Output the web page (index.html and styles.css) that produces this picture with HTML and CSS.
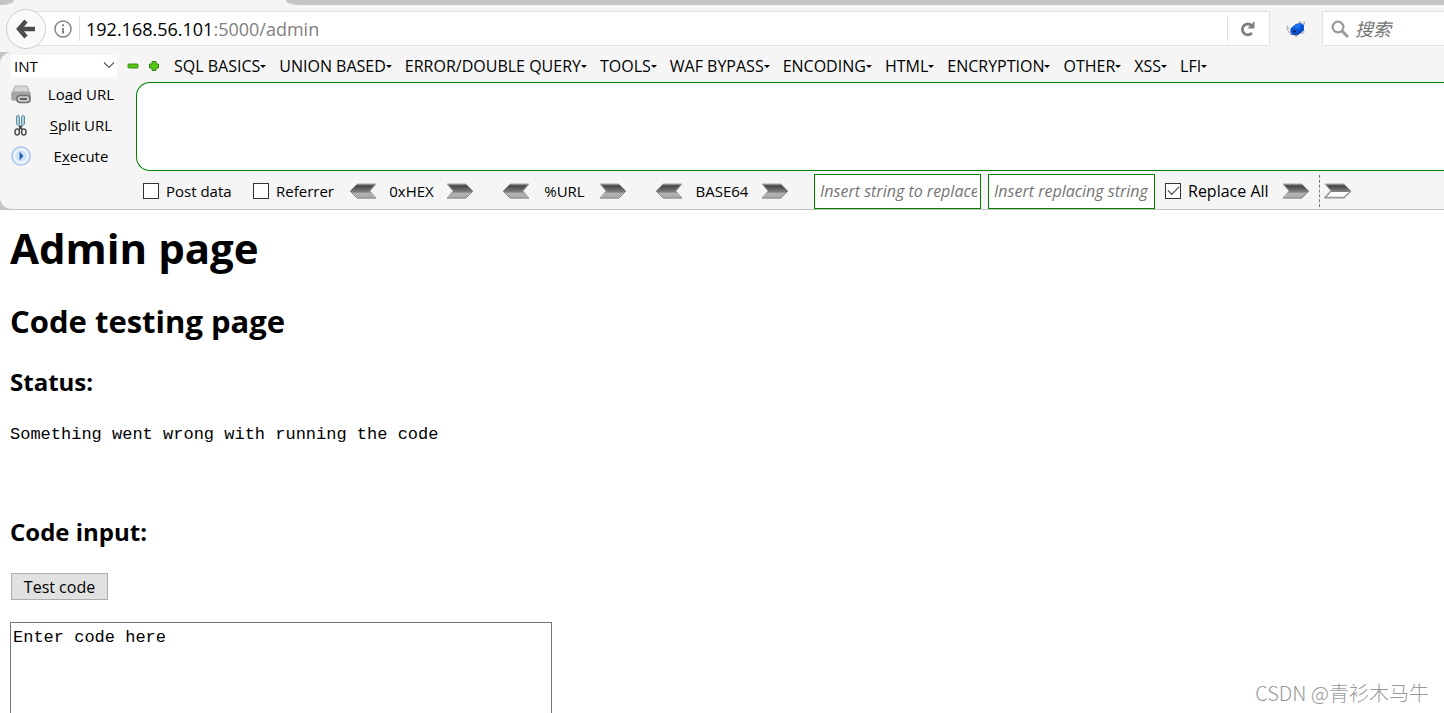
FILE: index.html
```html
<!DOCTYPE html>
<html lang="en">
<head>
<meta charset="utf-8">
<title>Admin page</title>
<link rel="stylesheet" href="styles.css">
</head>
<body>
<svg class="defs" aria-hidden="true">
  <defs>
    <linearGradient id="steel" x1="0" y1="0" x2="0" y2="1">
      <stop offset="0" stop-color="#777"/><stop offset=".15" stop-color="#484848"/><stop offset=".6" stop-color="#828282"/><stop offset=".62" stop-color="#b2b2b2"/><stop offset="1" stop-color="#aaa"/>
    </linearGradient>
    <linearGradient id="steel-open" x1="0" y1="0" x2="0" y2="1">
      <stop offset="0" stop-color="#777"/><stop offset=".15" stop-color="#444"/><stop offset=".56" stop-color="#858585"/><stop offset=".58" stop-color="#fff"/><stop offset="1" stop-color="#fff"/>
    </linearGradient>
    <linearGradient id="drive" x1="0" y1="0" x2="0" y2="1">
      <stop offset="0" stop-color="#ddd"/><stop offset="1" stop-color="#8c8c8c"/>
    </linearGradient>
    <symbol id="arrow" viewBox="0 0 28 16"><path d="M1 1H20L27 8L20 15H1L7 8Z" fill="url(#steel)" stroke="#aaa" stroke-width="1"/><path d="M1 15H20L27 8" fill="none" stroke="#8a8a8a"/></symbol>
    <symbol id="arrow-left" viewBox="0 0 28 16"><path d="M27 1H8L1 8L8 15H27L21 8Z" fill="url(#steel)" stroke="#aaa" stroke-width="1"/><path d="M27 15H8L1 8" fill="none" stroke="#8a8a8a"/></symbol>
    <symbol id="arrow-open" viewBox="0 0 28 16"><path d="M1 1H20L27 8L20 15H1L7 8Z" fill="url(#steel-open)" stroke="#aaa" stroke-width="1"/><path d="M7 8L1 14.5H20L27 8" fill="none" stroke="#999" stroke-width="1.6"/></symbol>
  </defs>
</svg>
<div class="window">
  <div class="tabstrip"><span class="tab-prev"></span><span class="tab-rest"></span></div>
  <header class="nav">
    <button class="back" aria-label="Back"><svg width="20" height="20" viewBox="0 0 20 20"><path d="M10 2L3 10L10 18M4 10H19" fill="none" stroke="#4c4c4c" stroke-width="4.4"/></svg></button>
    <div class="address">
      <button class="icon" aria-label="Site information"><svg width="18" height="18" viewBox="0 0 18 18"><circle cx="9" cy="9" r="8" fill="none" stroke="#858585" stroke-width="1.5"/><path d="M9 8V13.5M9 4.3V6.3" stroke="#858585" stroke-width="2"/></svg></button>
      <span class="rule"></span>
      <a class="url" href="#">192.168.56.101<span class="path">:5000/admin</span></a>
      <span class="rule"></span>
      <button class="icon reload" aria-label="Reload"><svg width="16" height="16" viewBox="0 0 16 16"><path d="M11.8 12A5.4 5.4 0 1 1 12 5" fill="none" stroke="#808080" stroke-width="2.8"/><path d="M14.5 0V7.5H7.5Z" fill="#808080"/></svg></button>
    </div>
    <button class="icon addon" aria-label="Add-on"><svg width="20" height="18" viewBox="0 0 20 18"><path d="M4 10L1 6L1.5 10L5 15M12 4L14 1L15 4L19 2L17 7L18 13L14 13L10 17L8 14" fill="#fff" stroke="#999" stroke-width=".8"/><path d="M5 8L10 4L14 3L18 5V10L15 13L11 15L6 14L4 12Z" fill="#0b55d5"/><path d="M10 4L15 4L13 9L7 8Z" fill="#1c70f0"/><path d="M5 14L11 15L17 9" fill="none" stroke="#12388f"/><path d="M7 11.5H10" stroke="#14233e" stroke-width="1.6"/></svg></button>
    <div class="search">
      <svg width="18" height="18" viewBox="0 0 18 18"><circle cx="7" cy="7" r="5.4" fill="none" stroke="#999" stroke-width="2.2"/><path d="M11 11L17 17" stroke="#999" stroke-width="3"/></svg>
      <input class="search-input" type="text" placeholder="搜索" aria-label="搜索">
    </div>
  </header>

  <div class="shelf"><section class="hackbar">
    <div class="menu">
      <div class="picker"><select class="type" aria-label="Type"><option>INT</option></select><svg class="chevron" width="12" height="8" viewBox="0 0 12 8"><path d="M1 1.5L6 6.5L11 1.5" fill="none" stroke="#555" stroke-width="1.1"/></svg></div>
      <div class="steps">
        <button class="icon" aria-label="Remove"><svg width="12" height="12" viewBox="0 0 12 12"><rect x="1" y="4" width="10" height="4" rx="1" fill="#55c811" stroke="#348814"/></svg></button>
        <button class="icon" aria-label="Add"><svg width="12" height="12" viewBox="0 0 12 12"><path d="M4 1.5H8V4H10.5V8H8V10.5H4V8H1.5V4H4Z" fill="#55c811" stroke="#348814" stroke-linejoin="round"/></svg></button>
      </div>
      <nav class="items">
        <button class="item">SQL BASICS</button><button class="item">UNION BASED</button><button class="item">ERROR/DOUBLE QUERY</button><button class="item">TOOLS</button><button class="item">WAF BYPASS</button><button class="item">ENCODING</button><button class="item">HTML</button><button class="item">ENCRYPTION</button><button class="item">OTHER</button><button class="item">XSS</button><button class="item">LFI</button>
      </nav>
    </div>
    <div class="work">
      <div class="actions">
        <button class="action"><svg width="22" height="22" viewBox="0 0 22 22"><path d="M5 3H17L20 10V16H2V10Z" fill="url(#drive)" stroke="#b0b0b0"/><path d="M2 10H20V17H2Z" fill="#a8a8a8" stroke="#999"/><path d="M6 4H16L18 8H4Z" fill="#d6d6d6"/><rect x="7" y="12.5" width="13" height="7" rx="3" fill="#ccc" stroke="#707070" stroke-width="1.6"/><path d="M10 16H17" stroke="#555" stroke-width="1.8"/></svg><span class="label">Lo<u>a</u>d URL</span></button>
        <button class="action"><svg width="22" height="22" viewBox="0 0 22 22"><path d="M6.5 2Q9 0 9.5 3V13L6.5 10ZM14.5 2Q12 0 11.5 3V13L14.5 10Z" fill="#acd3df" stroke="#6a8e9d"/><path d="M9.5 12L12.5 16M11.5 12L8.5 16" stroke="#444" stroke-width="1.8"/><ellipse cx="7.2" cy="18" rx="2.2" ry="3" fill="none" stroke="#555" stroke-width="1.6"/><ellipse cx="13.8" cy="18" rx="2.2" ry="3" fill="none" stroke="#555" stroke-width="1.6"/></svg><span class="label"><u>S</u>plit URL</span></button>
        <button class="action"><svg width="22" height="22" viewBox="0 0 22 22"><circle cx="11" cy="11" r="9" fill="#edf4fc" stroke="#b7cdec" stroke-width="2"/><circle cx="11" cy="11" r="6.5" fill="#d3e4f8" stroke="#fff"/><path d="M9.5 6.5L13.5 11L9.5 15.5Z" fill="#2463b7"/></svg><span class="label">E<u>x</u>ecute</span></button>
      </div>
      <textarea class="query" aria-label="URL"></textarea>
    </div>
    <div class="options">
      <label class="check"><input type="checkbox">Post data</label>
      <label class="check"><input type="checkbox">Referrer</label>
      <div class="codec"><button class="icon" aria-label="Decode hex"><svg width="28" height="16"><use href="#arrow-left"/></svg></button><span>0xHEX</span><button class="icon" aria-label="Encode hex"><svg width="28" height="16"><use href="#arrow"/></svg></button></div>
      <div class="codec"><button class="icon" aria-label="Decode URL"><svg width="28" height="16"><use href="#arrow-left"/></svg></button><span>%URL</span><button class="icon" aria-label="Encode URL"><svg width="28" height="16"><use href="#arrow"/></svg></button></div>
      <div class="codec wide"><button class="icon" aria-label="Decode base64"><svg width="28" height="16"><use href="#arrow-left"/></svg></button><span>BASE64</span><button class="icon" aria-label="Encode base64"><svg width="28" height="16"><use href="#arrow"/></svg></button></div>
      <div class="fields">
        <input class="field" type="text" placeholder="Insert string to replace" aria-label="String to replace">
        <input class="field" type="text" placeholder="Insert replacing string" aria-label="Replacing string">
      </div>
      <label class="check replace"><input type="checkbox" checked>Replace All</label>
      <div class="run"><button class="icon" aria-label="Replace"><svg width="28" height="16"><use href="#arrow"/></svg></button><span class="divider"></span><button class="icon" aria-label="Apply"><svg width="28" height="16"><use href="#arrow-open"/></svg></button></div>
    </div>
  </section></div>

  <main class="page">
    <h1>Admin page</h1>
    <h2>Code testing page</h2>
    <h3>Status:</h3>
    <p class="status">Something went wrong with running the code</p>
    <h3>Code input:</h3>
    <button class="test">Test code</button>
    <textarea class="code" aria-label="Code input">Enter code here</textarea>
  </main>
  <div class="watermark">CSDN @青衫木马牛</div>
</div>
</body>
</html>
```
FILE: styles.css
```css
* { box-sizing: border-box; }
body { margin: 0; background: #fff; color: #000; font: 15px/20px "Open Sans", "Noto Sans CJK SC", sans-serif; }
button, input, select, textarea { font: inherit; color: inherit; margin: 0; }
button { padding: 0; border: 0; background: none; white-space: nowrap; }
svg { display: block; flex: none; }
.defs { position: absolute; width: 0; height: 0; }
.window { position: relative; display: flex; flex-direction: column; height: 100vh; overflow: hidden; }

.tabstrip { display: flex; justify-content: space-between; flex: none; height: 5px; background: #f5f5f5; }
.tab-prev { width: 14px; background: #c5c5c5; border-bottom-right-radius: 12px 5px; }
.tab-rest { width: calc(100% - 286px); background: #c5c5c5; border-bottom-left-radius: 12px 5px; }
.nav { display: flex; align-items: center; flex: none; height: 47px; padding-left: 6px; background: #f5f5f5; }
.back { position: relative; z-index: 1; display: grid; place-items: center; flex: none; width: 40px; height: 40px; border: 1px solid #ccc; border-radius: 50%; background: #fafafa; }
.address { display: flex; align-items: center; flex: 1; height: 35px; margin-left: -16px; padding: 0 13px 0 23px; border: 1px solid #e2e2e2; background: #fff; }
.icon { display: grid; place-items: center; flex: none; }
.rule { width: 1px; height: 24px; margin: 0 6px 0 7px; background: #ddd; }
.url { flex: 1; color: #000; font-size: 18px; text-decoration: none; }
.path { color: #808080; }
.reload { margin-left: 6px; }
.addon { margin: 0 16px; }
.search { display: flex; align-items: center; gap: 6px; flex: none; width: 122px; height: 35px; padding-left: 8px; border: 1px solid #e2e2e2; border-right: 0; background: #fff; }
.search-input { width: 80px; padding: 0; border: 0; outline: 0; font-size: 18px; font-style: italic; }
::placeholder { color: #757575; opacity: 1; }

.shelf { flex: none; background: #c5c5c5; }
.hackbar { border-bottom: 1px solid #c0c0c0; border-radius: 12px 0 0 12px; background: #f5f5f5; }
.menu { display: flex; align-items: center; height: 30px; padding: 0 0 2px 11px; }
.picker { position: relative; flex: none; width: 106px; }
.type { display: block; width: 100%; height: 22px; padding: 0 3px; border: 0; background: #fff; appearance: none; }
.chevron { position: absolute; top: 6px; right: 2px; pointer-events: none; }
.steps { display: flex; gap: 9px; margin: 0 14px 0 10px; }
.items { display: flex; gap: 13px; font-size: 16px; }
.item { display: flex; align-items: center; }
.item::after { content: ""; border: 3px solid transparent; border-top-color: #000; border-bottom: 0; }
.work { display: flex; }
.actions { flex: none; width: 136px; padding-left: 10px; }
.action { display: flex; align-items: center; width: 112px; height: 31px; padding-bottom: 8px; }
.label { flex: 1; padding-left: 8px; text-align: center; }
.label u { text-underline-offset: 2px; }
.query { display: block; flex: 1; height: 89px; padding: 6px 12px; border: 1px solid #008000; border-right: 0; border-radius: 14px 0 0 14px; outline: 0; background: #fff; resize: none; }
.options { display: flex; align-items: center; height: 34px; padding: 0 0 2px 143px; white-space: nowrap; }
.check { display: flex; align-items: center; gap: 7px; width: 110px; }
.check input { display: grid; place-items: center; flex: none; width: 16px; height: 16px; border: 1px solid #333; background: #fff; appearance: none; }
.check input:checked::before { content: ""; width: 10px; height: 5px; margin-bottom: 4px; border: solid #333; border-width: 0 0 1px 1px; rotate: -45deg; }
.codec { display: flex; justify-content: space-between; align-items: center; width: 125px; margin-right: 28px; }
.check + .codec { margin-left: -14px; }
.wide { width: 134px; margin-right: 25px; }
.fields { display: flex; gap: 7px; }
.field { width: 167px; height: 35px; padding: 0 3px 0 5px; border: 1px solid #008000; outline: 0; background: #fff; font-size: 16px; font-style: italic; }
.replace { width: 117px; margin-left: 10px; font-size: 16px; }
.run { display: flex; align-items: center; gap: 4px; }
.divider { height: 32px; margin-left: 5px; border-left: 1px dashed #777; }

.page { display: flex; flex-direction: column; align-items: flex-start; flex: 1; min-height: 0; padding: 8px 10px 0; overflow: hidden; }
h1, h2, h3, p { flex: none; margin: 0; }
h1 { font-size: 42px; line-height: 60px; }
h2 { margin-top: 21px; font-size: 31px; line-height: 44px; }
h3 { margin-top: 23px; font-size: 24px; line-height: 32px; }
.status { margin: 26px 0 47px; }
.status, .code { font: 17px/22px "Liberation Mono", monospace; }
.test { flex: none; width: 97px; height: 27px; margin: 25px 0 22px 1px; border: 1px solid #adadad; background: #e1e1e1; font-size: 16px; }
.code { flex: none; width: 542px; height: 200px; padding: 4px 2px; border: 1px solid #767676; outline: 0; resize: none; }
.watermark { position: absolute; right: 15px; bottom: 6px; color: #999; font: 300 20px/28px "Noto Sans CJK SC", sans-serif; }
```
